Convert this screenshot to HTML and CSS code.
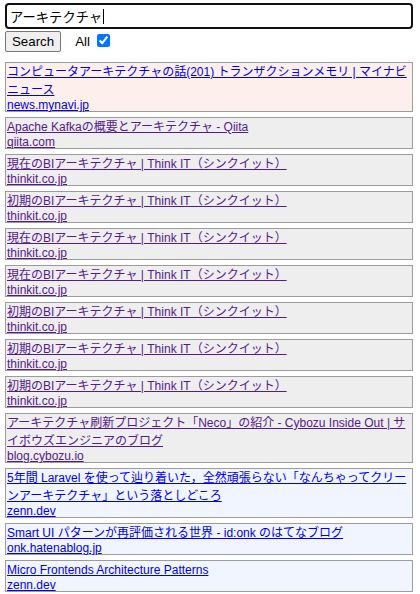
FILE: index.html
```html
<!DOCTYPE html>
<html lang="ja">
<head>
<meta charset="utf-8">
<title>Search</title>
<link rel="stylesheet" href="styles.css">
</head>
<body>
<form class="search">
  <div class="query" role="textbox">アーキテクチャ<span class="caret"></span></div>
  <div class="controls">
    <button type="button" class="btn">Search</button>
    <label class="all">All <input type="checkbox" checked></label>
  </div>
</form>
<ul class="results">
  <li class="card new"><a href="#a1" class="title">コンピュータアーキテクチャの話(201) トランザクションメモリ | マイナビニュース</a><a href="#a1" class="domain">news.mynavi.jp</a></li>
  <li class="card seen"><a class="title">Apache Kafkaの概要とアーキテクチャ - Qiita</a><a class="domain">qiita.com</a></li>
  <li class="card seen"><a class="title">現在のBIアーキテクチャ | Think IT（シンクイット）</a><a class="domain">thinkit.co.jp</a></li>
  <li class="card seen"><a class="title">初期のBIアーキテクチャ | Think IT（シンクイット）</a><a class="domain">thinkit.co.jp</a></li>
  <li class="card seen"><a class="title">現在のBIアーキテクチャ | Think IT（シンクイット）</a><a class="domain">thinkit.co.jp</a></li>
  <li class="card seen"><a class="title">現在のBIアーキテクチャ | Think IT（シンクイット）</a><a class="domain">thinkit.co.jp</a></li>
  <li class="card seen"><a class="title">初期のBIアーキテクチャ | Think IT（シンクイット）</a><a class="domain">thinkit.co.jp</a></li>
  <li class="card seen"><a class="title">初期のBIアーキテクチャ | Think IT（シンクイット）</a><a class="domain">thinkit.co.jp</a></li>
  <li class="card seen"><a class="title">初期のBIアーキテクチャ | Think IT（シンクイット）</a><a class="domain">thinkit.co.jp</a></li>
  <li class="card seen"><a class="title">アーキテクチャ刷新プロジェクト「Neco」の紹介 - Cybozu Inside Out | サイボウズエンジニアのブログ</a><a class="domain">blog.cybozu.io</a></li>
  <li class="card fresh"><a class="title">5年間 Laravel を使って辿り着いた，全然頑張らない「なんちゃってクリーンアーキテクチャ」という落としどころ</a><a class="domain">zenn.dev</a></li>
  <li class="card fresh"><a class="title">Smart UI パターンが再評価される世界 - id:onk のはてなブログ</a><a class="domain">onk.hatenablog.jp</a></li>
  <li class="card fresh"><a class="title">Micro Frontends Architecture Patterns</a><a class="domain">zenn.dev</a></li>
  <li class="card fresh"><a class="title">&nbsp;</a><a class="domain">&nbsp;</a></li>
</ul>
</body>
</html>
```

FILE: styles.css
```css
html, body {
  margin: 0;
  background: #ffffff;
}
body {
  padding: 3px 7px 0 5px;
  font-family: "Liberation Sans", Arial, sans-serif;
  overflow: hidden;
}
.search {
  display: flex;
  flex-direction: column;
  gap: 2px;
}
.query {
  box-sizing: border-box;
  height: 26px;
  border: 2px solid #111;
  border-radius: 4px;
  padding: 0 3px;
  font-family: "Noto Sans CJK JP", sans-serif;
  font-size: 13.3px;
  line-height: 21px;
  color: #000;
  display: flex;
  align-items: center;
}
.caret {
  display: inline-block;
  width: 1px;
  height: 15px;
  background: #000;
  margin-left: 1px;
}
.controls {
  display: flex;
  align-items: center;
  gap: 14px;
}
.btn {
  font-family: "Liberation Sans", Arial, sans-serif;
  font-size: 13.3px;
  height: 21px;
  padding: 0 6px;
  background: #efefef;
  border: 1px solid #767676;
  border-radius: 2px;
  color: #000;
  margin: 0;
}
.all {
  font-size: 13.3px;
  display: flex;
  align-items: center;
  gap: 3px;
}
.all input {
  margin: 0 0 2px 4px;
  width: 13px;
  height: 13px;
}
.results {
  list-style: none;
  margin: 10px 0 0;
  padding: 0;
  display: flex;
  flex-direction: column;
  gap: 5px;
}
.card {
  border: 1px solid #9c9c9c;
  padding: 0 1px;
  font-family: "Liberation Sans", "Noto Sans CJK JP", sans-serif;
  font-size: 12px;
}
.card a {
  display: block;
  text-decoration: underline;
}
.title {
  line-height: 18px;
}
.domain {
  line-height: 12px;
  height: 12px;
}
.new { background: #fdf0ec; }
.seen { background: #eeeeee; }
.fresh { background: #f0f5ff; }
.new a, .fresh a { color: #0000ee; }
.seen a { color: #551a8b; }
```
